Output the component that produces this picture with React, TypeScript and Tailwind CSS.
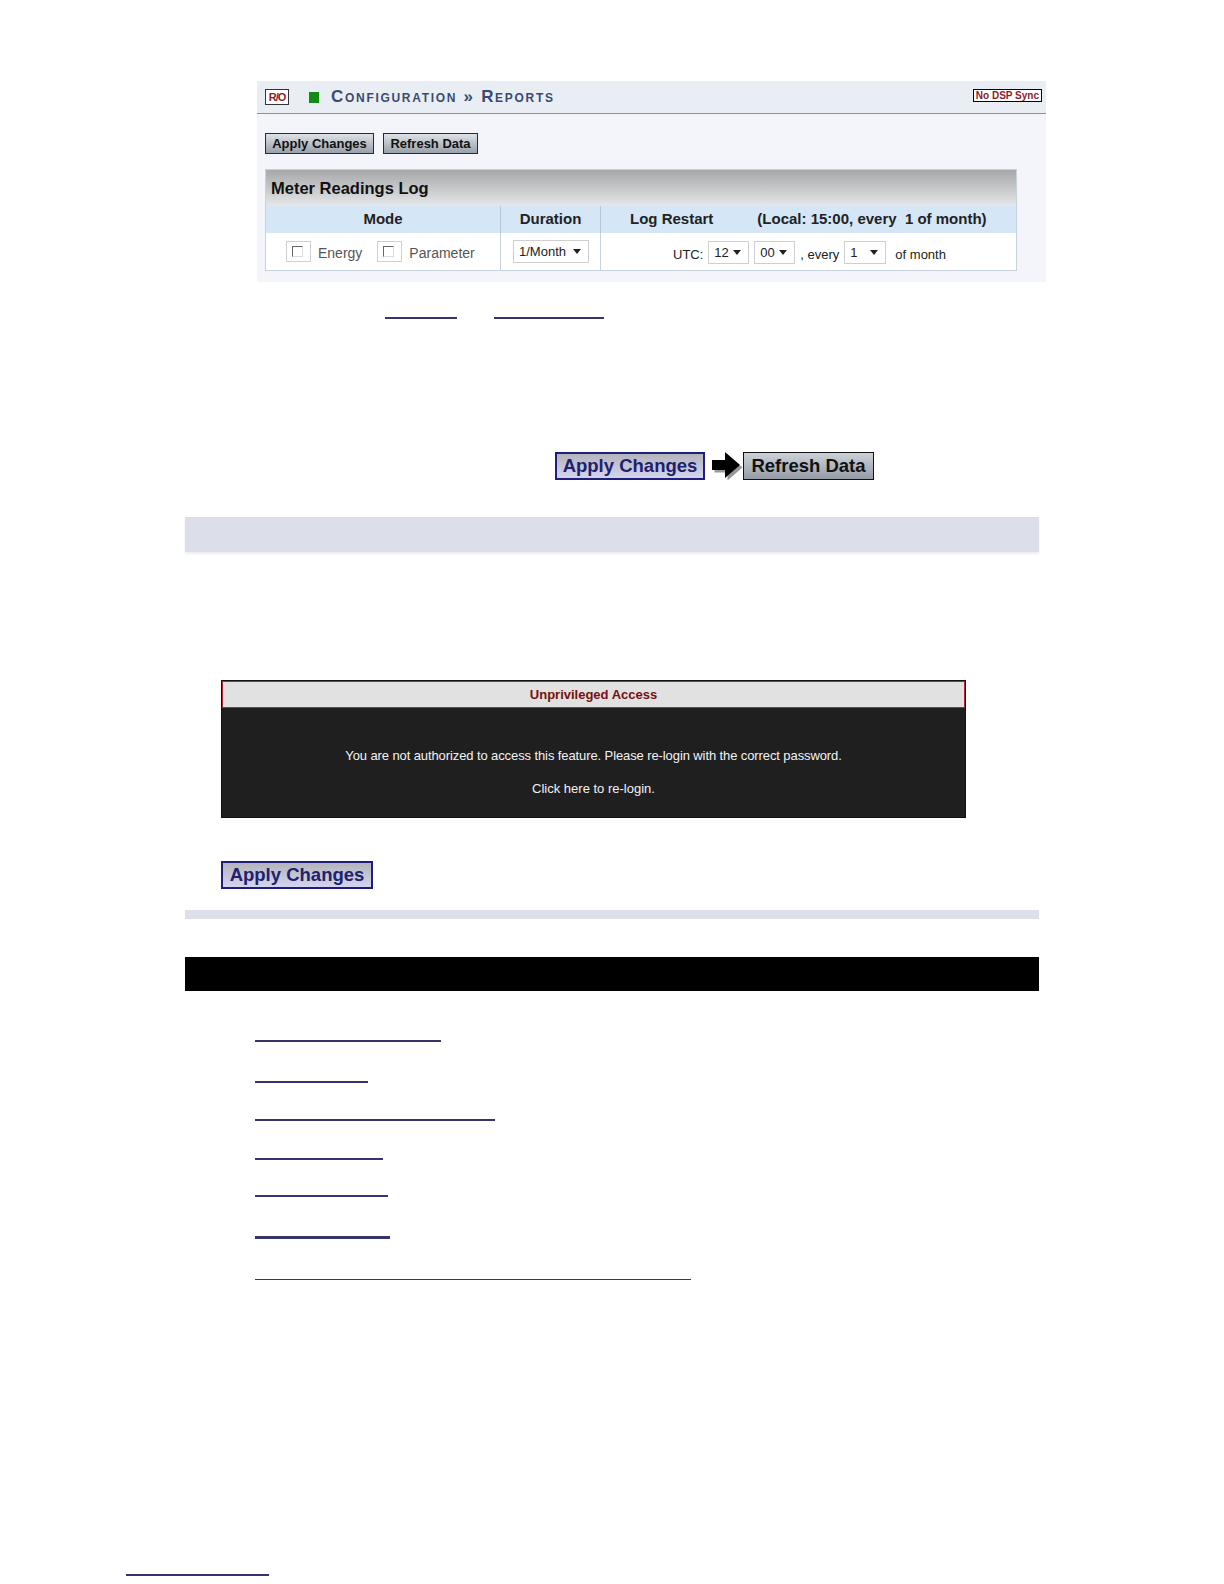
import React from 'react';

const smallBtn =
  'h-[21px] border border-[#2b2b2b] bg-gradient-to-b from-[#dfe3e8] to-[#98a0aa] text-[13px] font-bold text-[#111] leading-[19px] text-center';

const bigApply =
  'h-[28px] border-2 border-[#1e1e7e] bg-gradient-to-b from-[#b4b4bc] to-[#d4d4ee] text-[18.5px] font-bold text-[#20206e] leading-[24px] text-center';

function Caret() {
  return (
    <svg width="8" height="5" viewBox="0 0 8 5" className="ml-auto">
      <path d="M0 0 L8 0 L4 5 Z" fill="#222" />
    </svg>
  );
}

function Select({ value, w }: { value: string; w: string }) {
  return (
    <div className={`${w} h-[23px] border border-[#cfcfcf] bg-white flex items-center pl-[5px] pr-[7px] text-[13px] text-[#222]`}>
      <span>{value}</span>
      <Caret />
    </div>
  );
}

function Check() {
  return (
    <div className="w-[25px] h-[21px] border border-[#cfcfcf] bg-white relative">
      <div className="absolute left-[5px] top-[4px] w-[11px] h-[11px] border-t border-l border-t-[#666] border-l-[#666] border-b border-r border-b-[#ddd] border-r-[#ddd]" />
    </div>
  );
}

function Line({ w, mt, h = 'h-[2px]' }: { w: string; mt: string; h?: string }) {
  return <div className={`${w} ${mt} ${h} bg-[#35356c]`} />;
}

export default function App() {
  return (
    <div className="w-full h-[1584px] bg-white font-['Liberation_Sans',Arial,sans-serif] pt-[81px] overflow-hidden">
      {/* screenshot: configuration reports */}
      <div className="ml-[257px] w-[789px] h-[201px] bg-[#f3f5fb]">
        <div className="h-[33px] bg-[#e9eef5] border-b border-[#8a8f99] flex items-center pl-[8px] pr-[4px]">
          <div className="w-[24px] h-[16px] border border-[#333] bg-white text-[11px] font-bold text-[#8b1c2c] leading-[14px] text-center tracking-[-1px]">
            R/O
          </div>
          <div className="ml-[20px] w-[10px] h-[11px] bg-[#138a13]" />
          <div className="ml-[12px] text-[17px] font-bold text-[#3b4a70] tracking-[1.7px] [font-variant:small-caps]">
            Configuration » Reports
          </div>
          <div className="ml-auto mb-[4px] border border-black bg-white h-[13px] px-[2px] text-[10px] font-bold text-[#8b1c2c] leading-[11px]">
            No DSP Sync
          </div>
        </div>
        <div className="flex gap-[9px] ml-[8px] mt-[19px]">
          <button className={`${smallBtn} w-[109px]`}>Apply Changes</button>
          <button className={`${smallBtn} w-[95px]`}>Refresh Data</button>
        </div>
        <div className="ml-[8px] mt-[15px] w-[752px] border border-[#c8d2dc]">
          <div className="h-[36px] bg-gradient-to-b from-[#a6a8aa] to-[#e6e7e8] pl-[5px] flex items-center text-[16.5px] font-bold text-[#111]">
            Meter Readings Log
          </div>
          <div className="flex h-[27px] bg-[#d5e6f7] text-[15px] font-bold text-[#222] items-center">
            <div className="w-[235px] h-full flex items-center justify-center border-r border-[#b9c8d8]">Mode</div>
            <div className="w-[100px] h-full flex items-center justify-center border-r border-[#b9c8d8]">Duration</div>
            <div className="flex-1 flex items-center pl-[29px]">
              <span>Log Restart</span>
              <span className="ml-[44px] whitespace-pre">(Local: 15:00, every  1 of month)</span>
            </div>
          </div>
          <div className="flex h-[37px] bg-white text-[14px]">
            <div className="w-[235px] h-full flex items-center pl-[20px] border-r border-[#c8d2dc] text-[#555]">
              <Check />
              <span className="ml-[7px] mt-[3px]">Energy</span>
              <div className="ml-[15px]"><Check /></div>
              <span className="ml-[7px] mt-[3px]">Parameter</span>
            </div>
            <div className="w-[100px] h-full flex items-center pl-[12px] border-r border-[#c8d2dc]">
              <Select value="1/Month" w="w-[76px]" />
            </div>
            <div className="flex-1 flex items-center pl-[72px] text-[13px] text-[#222] pt-[2px]">
              <span className="mt-[4px]">UTC:</span>
              <div className="ml-[5px]"><Select value="12" w="w-[41px]" /></div>
              <div className="ml-[5px]"><Select value="00" w="w-[41px]" /></div>
              <span className="ml-[5px] mt-[4px]">, every</span>
              <div className="ml-[5px]"><Select value="1" w="w-[42px]" /></div>
              <span className="ml-[9px] mt-[4px]">of month</span>
            </div>
          </div>
        </div>
      </div>

      {/* inline links */}
      <div className="flex mt-[35px] ml-[385px] gap-[37px]">
        <Line w="w-[72px]" mt="mt-0" />
        <Line w="w-[110px]" mt="mt-0" />
      </div>

      {/* apply -> refresh */}
      <div className="flex items-center mt-[133px] ml-[555px] h-[28px]">
        <button className={`${bigApply} w-[150px]`}>Apply Changes</button>
        <svg width="32" height="30" viewBox="0 0 32 30" className="ml-[6px]">
          <path d="M2 10 L15 10 L15 2 L30 15 L15 28 L15 20 L2 20 Z" fill="#999" transform="translate(1.5,1.5)" />
          <path d="M1 9 L14 9 L14 1 L29 14 L14 27 L14 19 L1 19 Z" fill="#000" />
        </svg>
        <button className="w-[131px] h-[28px] border border-[#111] bg-gradient-to-b from-[#cdd2d8] to-[#959ca6] text-[18.5px] font-bold text-[#111] leading-[26px]">
          Refresh Data
        </button>
      </div>

      {/* gray band */}
      <div className="mt-[37px] ml-[185px] w-[854px] h-[35px] bg-[#dcdfea] shadow-[0_2px_2px_#eceef4]" />

      {/* unprivileged access dialog */}
      <div className="mt-[128px] ml-[221px] w-[745px] h-[138px] bg-[#1f1f1f] border border-[#111]">
        <div className="h-[27px] bg-[#e1e1e1] border border-[#b3272b] flex items-center justify-center text-[13px] font-bold text-[#761010]">
          Unprivileged Access
        </div>
        <div className="text-center text-[13px] text-[#f2f2f2] mt-[38px] tracking-[-0.1px]">
          You are not authorized to access this feature. Please re-login with the correct password.
        </div>
        <div className="text-center text-[13px] text-[#f2f2f2] mt-[13px]">Click here to re-login.</div>
      </div>

      {/* apply button */}
      <button className={`${bigApply} block mt-[43px] ml-[221px] w-[152px]`}>Apply Changes</button>

      <div className="mt-[21px] ml-[185px] w-[854px] h-[9px] bg-[#dde0ea]" />

      <div className="mt-[38px] ml-[185px] w-[854px] h-[34px] bg-black" />

      {/* link list */}
      <div className="ml-[255px] flex flex-col">
        <Line w="w-[186px]" mt="mt-[49px]" />
        <Line w="w-[113px]" mt="mt-[39px]" />
        <Line w="w-[240px]" mt="mt-[36px]" />
        <Line w="w-[128px]" mt="mt-[37px]" />
        <Line w="w-[133px]" mt="mt-[35px]" />
        <Line w="w-[135px]" mt="mt-[39px]" h="h-[3px]" />
        <Line w="w-[436px]" mt="mt-[40px]" h="h-[1px]" />
      </div>

      <div className="ml-[126px] mt-[294px] w-[143px] h-[2px] bg-[#35356c]" />
    </div>
  );
}
